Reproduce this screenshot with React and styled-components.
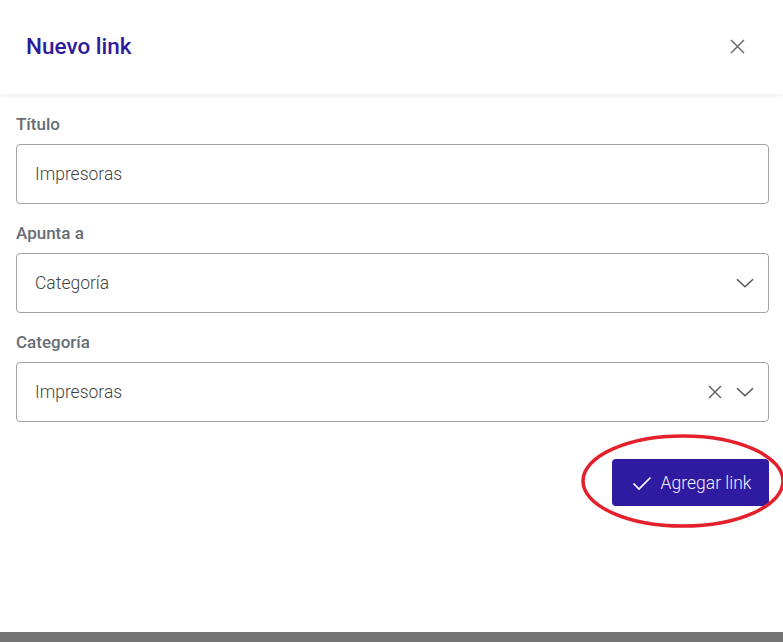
import styled, { createGlobalStyle } from "styled-components";

const Global = createGlobalStyle`
  html, body {
    margin: 0;
    padding: 0;
    background: #747474;
    font-family: Roboto, "Liberation Sans", sans-serif;
  }
`;

const Modal = styled.div`
  position: relative;
  height: 632px;
  background: #fff;
  box-shadow: 0 2px 6px rgba(0, 0, 0, 0.35);
  display: flex;
  flex-direction: column;
`;

const Header = styled.div`
  height: 94px;
  box-sizing: border-box;
  display: flex;
  align-items: center;
  justify-content: space-between;
  padding: 0 36px 2px 26px;
  box-shadow: 0 2px 4px rgba(0, 0, 0, 0.07);
`;

const Title = styled.h2`
  margin: 0;
  font-size: 22.5px;
  font-weight: 500;
  color: #2e1c9c;
`;

const IconButton = styled.button`
  border: 0;
  background: transparent;
  padding: 0;
  width: 20px;
  height: 20px;
  display: flex;
  align-items: center;
  justify-content: center;
  cursor: pointer;
`;

const Body = styled.div`
  padding: 18px 14px 0 16px;
  display: flex;
  flex-direction: column;
  gap: 17px;
`;

const Field = styled.div`
  display: flex;
  flex-direction: column;
`;

const Label = styled.label`
  font-size: 17px;
  line-height: 24px;
  font-weight: 500;
  color: #676d74;
  margin-bottom: 8px;
`;

const Box = styled.div`
  height: 60px;
  box-sizing: border-box;
  border: 1px solid #a3a3a3;
  border-radius: 4px;
  display: flex;
  align-items: center;
  padding: 0 14px 0 18px;
  font-size: 17.5px;
  font-weight: 300;
  color: #444;
`;

const Value = styled.span`
  flex: 1;
`;

const Icons = styled.div`
  display: flex;
  align-items: center;
  gap: 14px;
`;

const Footer = styled.div`
  display: flex;
  justify-content: flex-end;
  padding: 37px 14px 0 0;
`;

const Primary = styled.button`
  height: 47px;
  width: 157px;
  border: 0;
  border-radius: 4px;
  background: #2f1aa2;
  color: #f2f0ff;
  font-family: inherit;
  font-size: 17.5px;
  font-weight: 300;
  display: flex;
  align-items: center;
  justify-content: center;
  gap: 9px;
  padding-right: 4px;
  cursor: pointer;
`;

const Annotation = styled.svg`
  position: absolute;
  left: 580px;
  top: 432px;
  pointer-events: none;
`;

const Chevron = () => (
  <svg width="18" height="10" viewBox="0 0 18 10" fill="none" stroke="#555" strokeWidth="1.5">
    <path d="M1 1.2l8 7.6 8-7.6" />
  </svg>
);

const Cross = ({ size = 14, color = "#666" }) => (
  <svg width={size} height={size} viewBox="0 0 14 14" fill="none" stroke={color} strokeWidth="1.4">
    <path d="M1 1l12 12M13 1L1 13" />
  </svg>
);

export default function App() {
  return (
    <>
      <Global />
      <Modal>
        <Header>
          <Title>Nuevo link</Title>
          <IconButton aria-label="Cerrar">
            <Cross size={15} color="#6b6b6b" />
          </IconButton>
        </Header>
        <Body>
          <Field>
            <Label>Título</Label>
            <Box>
              <Value>Impresoras</Value>
            </Box>
          </Field>
          <Field>
            <Label>Apunta a</Label>
            <Box>
              <Value>Categoría</Value>
              <Chevron />
            </Box>
          </Field>
          <Field>
            <Label>Categoría</Label>
            <Box>
              <Value>Impresoras</Value>
              <Icons>
                <Cross size={14} color="#5a5a5a" />
                <Chevron />
              </Icons>
            </Box>
          </Field>
        </Body>
        <Footer>
          <Primary>
            <svg width="20" height="16" viewBox="0 0 20 16" fill="none" stroke="#fff" strokeWidth="1.7">
              <path d="M1.5 8.5l5.5 5.5L18.5 2.5" />
            </svg>
            Agregar link
          </Primary>
        </Footer>
        <Annotation width="206" height="100" viewBox="0 0 206 100">
          <ellipse cx="103" cy="49" rx="100" ry="45" fill="none" stroke="#e3202b" strokeWidth="3.5" />
        </Annotation>
      </Modal>
    </>
  );
}
